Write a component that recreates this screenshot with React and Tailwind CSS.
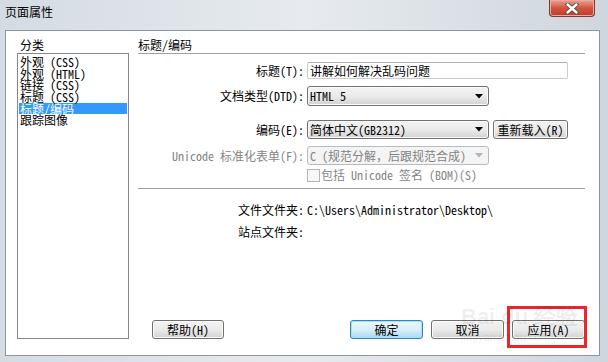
import React from 'react';

const font = "font-['Noto_Sans_Mono_CJK_SC','Noto_Sans_CJK_SC',sans-serif]";

function Arrow({ disabled }) {
  return (
    <svg width="8" height="5" viewBox="0 0 8 5" className="shrink-0">
      <polygon points="0,0 8,0 4,4.5" fill={disabled ? '#b4b4b4' : '#000'} />
    </svg>
  );
}

function Select({ value, disabled, className = '' }) {
  return (
    <div
      className={`flex items-center pl-[2px] pr-[5px] rounded-[3px] border ${
        disabled
          ? 'border-[#b8bcc0] bg-[#f4f4f4] text-[#838383]'
          : 'border-[#707070] bg-gradient-to-b from-[#f3f3f3] via-[#ebebeb] to-[#d2d2d2] shadow-[inset_0_0_0_1px_#fbfbfb]'
      } ${className}`}
    >
      <span className="flex-1 leading-[14px] whitespace-nowrap">{value}</span>
      <Arrow disabled={disabled} />
    </div>
  );
}

function Button({ children, primary, className = '' }) {
  return (
    <div
      className={`h-[19px] flex items-center justify-center rounded-[3px] border leading-[14px] whitespace-nowrap ${
        primary
          ? 'border-[#3c7fb1] bg-gradient-to-b from-[#eaf6fd] via-[#d9f0fc] to-[#a7d9f5] shadow-[inset_0_0_0_1px_#9ee4fb]'
          : 'border-[#707070] bg-gradient-to-b from-[#f3f3f3] via-[#ebebeb] to-[#d2d2d2] shadow-[inset_0_0_0_1px_#fbfbfb]'
      } ${className}`}
    >
      {children}
    </div>
  );
}

function Row({ label, disabled, children, className = '' }) {
  return (
    <div className={`flex items-center ${className}`}>
      <div
        className={`w-[166px] text-right leading-[14px] whitespace-nowrap ${
          disabled ? 'text-[#858585]' : ''
        }`}
      >
        {label}
      </div>
      <div className="ml-[3px] flex items-center h-full">{children}</div>
    </div>
  );
}

export default function App() {
  const categories = ['外观 (CSS)', '外观 (HTML)', '链接 (CSS)', '标题 (CSS)', '标题/编码', '跟踪图像'];
  const selected = 4;

  return (
    <div
      className={`w-[608px] h-[362px] flex flex-col overflow-hidden bg-gradient-to-r from-[#d4dbe2] via-[#e7ebef] to-[#cfd6dd] pl-[5px] pr-[8px] pb-[6px] text-[12px] text-black ${font}`}
    >
      {/* Title bar */}
      <div className="h-[30px] flex items-start shrink-0">
        <span className="mt-[5px] leading-[14px]">页面属性</span>
        <div className="ml-auto mr-[5px] w-[46px] h-[17px] rounded-b-[4px] border border-t-0 border-[#7b3b33] bg-gradient-to-b from-[#e7a496] via-[#d0553f] to-[#c13a22] flex items-center justify-center shadow-[inset_0_0_0_1px_#eda99c]">
          <svg width="14" height="11" viewBox="0 0 14 11">
            <path d="M2.5 1.5 L11.5 9.5 M11.5 1.5 L2.5 9.5" stroke="#4a4a4a" strokeWidth="4.2" strokeLinecap="round" />
            <path d="M2.5 1.5 L11.5 9.5 M11.5 1.5 L2.5 9.5" stroke="#ffffff" strokeWidth="2.4" strokeLinecap="round" />
          </svg>
        </div>
      </div>

      {/* Client area */}
      <div className="relative flex-1 flex bg-white border border-[#8e959c] pt-[7px] pb-[16px] pl-[11px] pr-[14px]">
        {/* Left: categories */}
        <div className="w-[112px] flex flex-col shrink-0">
          <div className="leading-[14px] pl-[3px]">分类</div>
          <div className="mt-[1px] flex-1 border border-[#828790] pt-[2px] px-[1px]">
            {categories.map((c, i) => (
              <div
                key={c}
                className={`h-[11.67px] leading-[11.67px] pl-[1px] whitespace-nowrap ${
                  i === selected ? 'bg-[#3399ff] text-white' : ''
                }`}
              >
                {c}
              </div>
            ))}
          </div>
        </div>

        {/* Right: form */}
        <div className="ml-[9px] flex-1 flex flex-col">
          <div className="leading-[14px] pb-[1px] border-b border-[#a0a0a0]">标题/编码</div>

          <Row label="标题(T):" className="mt-[8px] h-[17px]">
            <div className="w-[261px] h-[17px] border border-[#c9ccd2] border-t-[#abadb3] rounded-[2px] pl-[2px] leading-[14px] flex items-center">
              讲解如何解决乱码问题
            </div>
          </Row>

          <Row label="文档类型(DTD):" className="mt-[7px] h-[20px]">
            <Select value="HTML 5" className="w-[182px] h-[20px]" />
          </Row>

          <Row label="编码(E):" className="mt-[14px] h-[19px]">
            <Select value="简体中文(GB2312)" className="w-[182px] h-[19px]" />
            <Button className="ml-[4px] w-[75px]">重新载入(R)</Button>
          </Row>

          <Row label="Unicode 标准化表单(F):" disabled className="mt-[7px] h-[19px]">
            <Select value="C (规范分解，后跟规范合成)" disabled className="w-[182px] h-[19px]" />
          </Row>

          <Row label="" className="mt-[2px] h-[16px]">
            <div className="w-[13px] h-[13px] border border-[#b5b5b5] bg-[#f7f7f7]" />
            <span className="ml-[1px] leading-[14px] text-[#858585] whitespace-nowrap">包括 Unicode 签名 (BOM)(S)</span>
          </Row>

          <div className="mt-[5px] border-t border-[#a0a0a0]" />

          <Row label="文件文件夹:" className="mt-[14px] h-[14px]">
            <span className="leading-[14px] whitespace-nowrap">C:\Users\Administrator\Desktop\</span>
          </Row>

          <Row label="站点文件夹:" className="mt-[8px] h-[14px]">
            <span />
          </Row>

          {/* Buttons */}
          <div className="mt-auto flex items-center">
            <Button className="ml-[14px] w-[72px]">帮助(H)</Button>
            <div className="ml-auto flex gap-[8px]">
              <Button primary className="w-[73px]">确定</Button>
              <Button className="w-[73px]">取消</Button>
              <div className="relative">
                <Button className="w-[73px]">应用(A)</Button>
                <div className="absolute -left-[5px] -right-[2px] -top-[14px] -bottom-[9px] border-[3px] border-[#e8262b]" />
              </div>
            </div>
          </div>
        </div>

        {/* Watermark */}
        <div className="absolute left-[455px] top-[272px] w-[112px] flex flex-col items-start pointer-events-none text-black/[0.08] font-['Liberation_Sans',sans-serif]">
          <span className="text-[22px] font-bold leading-[28px] whitespace-nowrap">Bai du 经验</span>
          <span className="text-[11px] leading-[12px] whitespace-nowrap">jingyan.baidu.com</span>
        </div>
      </div>
    </div>
  );
}
